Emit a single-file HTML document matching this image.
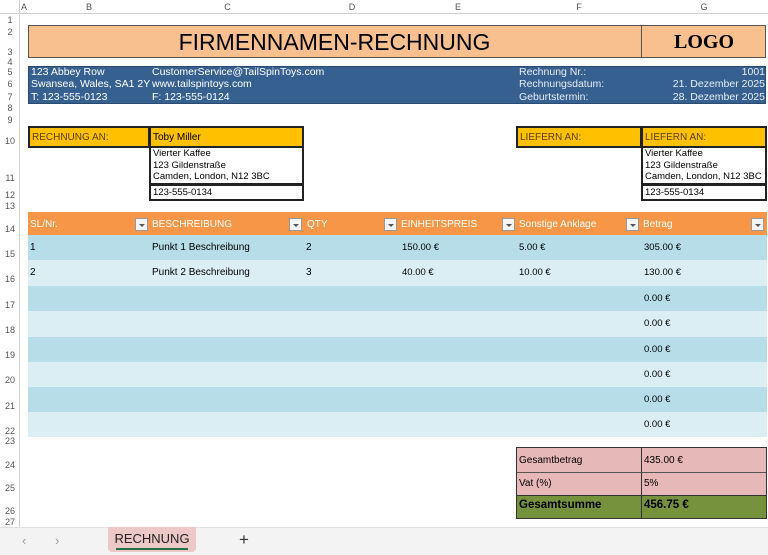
<!DOCTYPE html>
<html><head><meta charset="utf-8"><style>
*{margin:0;padding:0;box-sizing:border-box}
body{width:768px;height:555px;overflow:hidden;background:#fff;font-family:"Liberation Sans",Arial,sans-serif;position:relative;font-size:10px;color:#000}
.a{position:absolute;white-space:nowrap}
.rn{position:absolute;left:0;width:20px;text-align:center;font-size:9px;color:#555}
.ch{position:absolute;top:0;height:14px;font-size:9px;color:#555;text-align:center;line-height:14px}
.dd{position:absolute;width:13px;height:13px;background:#f4f4f4;border:1px solid #999;}
.dd:after{content:"";position:absolute;left:3px;top:5px;border-left:3px solid transparent;border-right:3px solid transparent;border-top:3px solid #555}
.w{color:#fff}
</style></head><body>
<div class="a" style="left:0;top:0;width:768px;height:14px;background:#fff;border-bottom:1px solid #d0d0d0"></div>
<div class="a" style="left:0;top:0;width:20px;height:555px;border-right:1px solid #d0d0d0"></div>
<div class="ch" style="left:20px;width:8px">A</div>
<div class="ch" style="left:28px;width:122px">B</div>
<div class="ch" style="left:150px;width:155px">C</div>
<div class="ch" style="left:305px;width:94px">D</div>
<div class="ch" style="left:399px;width:118px">E</div>
<div class="ch" style="left:517px;width:124px">F</div>
<div class="ch" style="left:641px;width:126px">G</div>
<div class="rn" style="top:15px">1</div><div class="rn" style="top:27px">2</div><div class="rn" style="top:47px">3</div><div class="rn" style="top:57px">4</div>
<div class="rn" style="top:67px">5</div><div class="rn" style="top:79px">6</div><div class="rn" style="top:92px">7</div><div class="rn" style="top:103px">8</div>
<div class="rn" style="top:115px">9</div><div class="rn" style="top:136px">10</div><div class="rn" style="top:173px">11</div><div class="rn" style="top:190px">12</div>
<div class="rn" style="top:201px">13</div><div class="rn" style="top:224px">14</div><div class="rn" style="top:249px">15</div><div class="rn" style="top:274px">16</div>
<div class="rn" style="top:300px">17</div><div class="rn" style="top:325px">18</div><div class="rn" style="top:350px">19</div><div class="rn" style="top:375px">20</div>
<div class="rn" style="top:401px">21</div><div class="rn" style="top:426px">22</div><div class="rn" style="top:436px">23</div><div class="rn" style="top:460px">24</div>
<div class="rn" style="top:483px">25</div><div class="rn" style="top:506px">26</div><div class="rn" style="top:517px">27</div>

<div class="a" style="left:28px;top:25px;width:738px;height:33px;background:#f8c08f;border:1px solid #555"></div>
<div class="a" style="left:641px;top:25px;width:1px;height:33px;background:#555"></div>
<div class="a" style="left:28px;top:29px;width:613px;text-align:center;font-size:23px">FIRMENNAMEN-RECHNUNG</div>
<div class="a" style="left:641px;top:31px;width:126px;text-align:center;font-size:20px;font-family:'Liberation Serif',serif;font-weight:bold">LOGO</div>

<div class="a" style="left:28px;top:66px;width:738px;height:38px;background:#35608f;border:1px solid #2a4a70"></div>
<div class="a w" style="left:31px;top:66px;font-size:10.5px;line-height:12.4px;width:119px;overflow:hidden">123 Abbey Row<br>Swansea, Wales, SA1 2YZ<br>T: 123-555-0123</div>
<div class="a w" style="left:152px;top:66px;font-size:10.5px;line-height:12.4px">CustomerService@TailSpinToys.com<br>www.tailspintoys.com<br>F: 123-555-0124</div>
<div class="a w" style="left:519px;top:66px;font-size:10.5px;line-height:12.4px;color:#e8eef5">Rechnung Nr.:<br>Rechnungsdatum:<br>Geburtstermin:</div>
<div class="a w" style="left:641px;top:66px;width:124px;text-align:right;font-size:10.5px;line-height:12.4px;color:#e8eef5">1001<br>21. Dezember 2025<br>28. Dezember 2025</div>

<div class="a" style="left:28px;top:126px;width:122px;height:22px;background:#ffc000;border:2px solid #222;padding:4px 0 0 2px;color:#5a4200">RECHNUNG AN:</div>
<div class="a" style="left:149px;top:126px;width:155px;height:22px;background:#ffc000;border:2px solid #222;padding:4px 0 0 2px">Toby Miller</div>
<div class="a" style="left:149px;top:147px;width:155px;height:38px;border:2px solid #222;border-top:0;padding:1px 0 0 2px;font-size:9.5px;line-height:11.5px">Vierter Kaffee<br>123 Gildenstraße<br>Camden, London, N12 3BC</div>
<div class="a" style="left:149px;top:184px;width:155px;height:17px;border:2px solid #222;padding:1px 0 0 2px;font-size:9.5px">123-555-0134</div>

<div class="a" style="left:516px;top:126px;width:126px;height:22px;background:#ffc000;border:2px solid #222;padding:4px 0 0 2px;color:#5a4200">LIEFERN AN:</div>
<div class="a" style="left:641px;top:126px;width:126px;height:22px;background:#ffc000;border:2px solid #222;padding:4px 0 0 2px;color:#5a4200">LIEFERN AN:</div>
<div class="a" style="left:641px;top:147px;width:126px;height:38px;border:2px solid #222;border-top:0;padding:1px 0 0 2px;font-size:9.5px;line-height:11.5px">Vierter Kaffee<br>123 Gildenstraße<br>Camden, London, N12 3BC</div>
<div class="a" style="left:641px;top:184px;width:126px;height:17px;border:2px solid #222;padding:1px 0 0 2px;font-size:9.5px">123-555-0134</div>

<div class="a" style="left:28px;top:212px;width:739px;height:23px;background:#f79646"></div>
<div class="a w" style="left:30px;top:219px">SL/Nr.</div>
<div class="a w" style="left:152px;top:219px">BESCHREIBUNG</div>
<div class="a w" style="left:307px;top:219px">QTY</div>
<div class="a w" style="left:401px;top:219px">EINHEITSPREIS</div>
<div class="a w" style="left:519px;top:219px">Sonstige Anklage</div>
<div class="a w" style="left:643px;top:219px">Betrag</div>
<div class="dd" style="left:135px;top:218px"></div><div class="dd" style="left:289px;top:218px"></div>
<div class="dd" style="left:384px;top:218px"></div><div class="dd" style="left:502px;top:218px"></div>
<div class="dd" style="left:626px;top:218px"></div><div class="dd" style="left:751px;top:218px"></div>

<div class="a" style="left:28px;top:235px;width:739px;height:25px;background:#b7dde8"></div>
<div class="a" style="left:28px;top:260px;width:739px;height:26px;background:#dbeef3"></div>
<div class="a" style="left:28px;top:286px;width:739px;height:25px;background:#b7dde8"></div>
<div class="a" style="left:28px;top:311px;width:739px;height:26px;background:#dbeef3"></div>
<div class="a" style="left:28px;top:337px;width:739px;height:25px;background:#b7dde8"></div>
<div class="a" style="left:28px;top:362px;width:739px;height:25px;background:#dbeef3"></div>
<div class="a" style="left:28px;top:387px;width:739px;height:25px;background:#b7dde8"></div>
<div class="a" style="left:28px;top:412px;width:739px;height:25px;background:#dbeef3"></div>

<div class="a" style="left:30px;top:242px">1</div><div class="a" style="left:152px;top:242px">Punkt 1 Beschreibung</div><div class="a" style="left:306px;top:242px">2</div>
<div class="a" style="left:402px;top:242px;font-size:9.5px">150.00 €</div><div class="a" style="left:519px;top:242px;font-size:9.5px">5.00 €</div><div class="a" style="left:644px;top:242px;font-size:9.5px">305.00 €</div>
<div class="a" style="left:30px;top:267px">2</div><div class="a" style="left:152px;top:267px">Punkt 2 Beschreibung</div><div class="a" style="left:306px;top:267px">3</div>
<div class="a" style="left:402px;top:267px;font-size:9.5px">40.00 €</div><div class="a" style="left:519px;top:267px;font-size:9.5px">10.00 €</div><div class="a" style="left:644px;top:267px;font-size:9.5px">130.00 €</div>
<div class="a" style="left:644px;top:293px;font-size:9.5px">0.00 €</div>
<div class="a" style="left:644px;top:318px;font-size:9.5px">0.00 €</div>
<div class="a" style="left:644px;top:344px;font-size:9.5px">0.00 €</div>
<div class="a" style="left:644px;top:369px;font-size:9.5px">0.00 €</div>
<div class="a" style="left:644px;top:394px;font-size:9.5px">0.00 €</div>
<div class="a" style="left:644px;top:419px;font-size:9.5px">0.00 €</div>

<div class="a" style="left:516px;top:447px;width:251px;height:72px;border:1px solid #333;background:#e6b8b7"></div>
<div class="a" style="left:517px;top:495px;width:249px;height:23px;background:#76923c"></div>
<div class="a" style="left:641px;top:447px;width:1px;height:72px;background:#333"></div>
<div class="a" style="left:517px;top:472px;width:249px;height:1px;background:#555"></div>
<div class="a" style="left:517px;top:495px;width:249px;height:1px;background:#333"></div>
<div class="a" style="left:519px;top:455px">Gesamtbetrag</div><div class="a" style="left:644px;top:455px">435.00 €</div>
<div class="a" style="left:519px;top:478px">Vat (%)</div><div class="a" style="left:644px;top:478px">5%</div>
<div class="a" style="left:519px;top:499px;font-weight:bold;font-size:11.5px">Gesamtsumme</div><div class="a" style="left:644px;top:499px;font-weight:bold;font-size:11.5px">456.75 €</div>

<div class="a" style="left:0;top:527px;width:768px;height:28px;background:#f3f3f3;border-top:1px solid #e0e0e0"></div>
<div class="a" style="left:22px;top:533px;color:#999;font-size:13px">‹</div>
<div class="a" style="left:55px;top:533px;color:#999;font-size:13px">›</div>
<div class="a" style="left:108px;top:527px;width:88px;height:25px;background:#ecc9c7;border-radius:0 0 4px 4px"></div>
<div class="a" style="left:108px;top:531px;width:88px;text-align:center;font-size:13px;color:#222">RECHNUNG</div>
<div class="a" style="left:116px;top:548px;width:72px;height:2px;background:#217346"></div>
<div class="a" style="left:239px;top:530px;font-size:17px;color:#333">+</div>
</body></html>
